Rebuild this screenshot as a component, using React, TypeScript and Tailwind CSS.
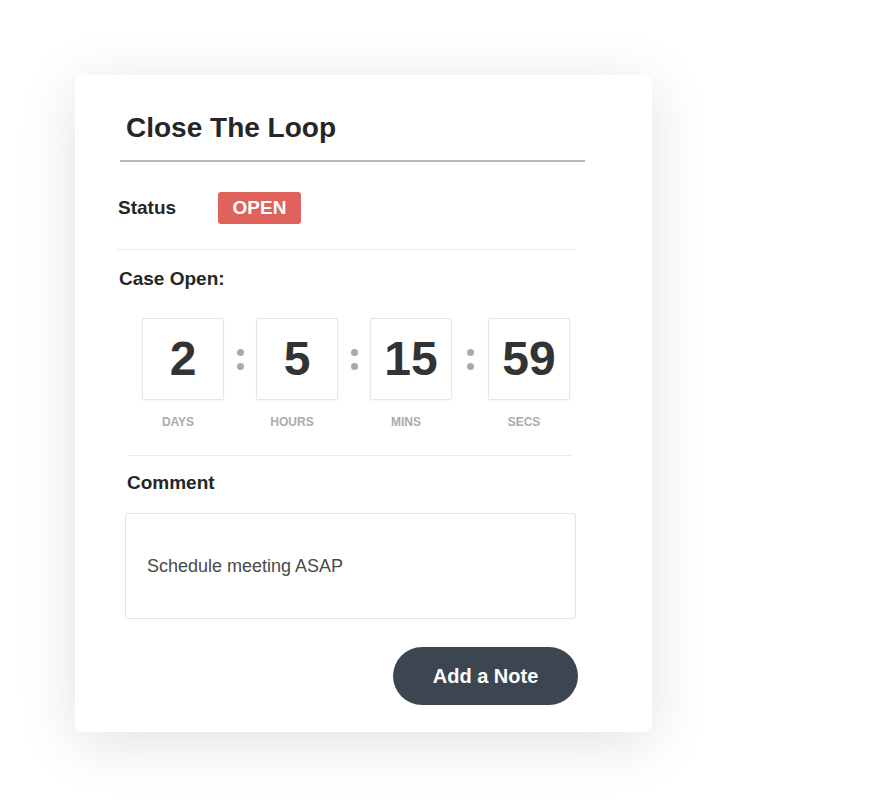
import React from "react";

const units = [
  { v: "2", l: "DAYS" },
  { v: "5", l: "HOURS" },
  { v: "15", l: "MINS" },
  { v: "59", l: "SECS" },
];

function Colon({ w }: { w: string }) {
  return (
    <div className={`${w} h-[82px] flex flex-col items-center justify-center gap-[7px]`}>
      <span className="block w-[7px] h-[7px] rounded-full bg-[#a9a9a9]" />
      <span className="block w-[7px] h-[7px] rounded-full bg-[#a9a9a9]" />
    </div>
  );
}

export default function App() {
  return (
    <div className="w-[879px] h-[808px] bg-white overflow-hidden" style={{ fontFamily: '"Liberation Sans", Arial, sans-serif' }}>
      <div className="ml-[75px] mt-[75px] w-[577px] h-[657px] bg-white rounded-[8px] shadow-[0_10px_60px_rgba(0,0,0,0.12)] pt-[37px] flex flex-col">
        <h1 className="ml-[51px] text-[28px] leading-[32px] font-bold text-[#262626]">Close The Loop</h1>
        <div className="ml-[45px] mt-[16px] w-[465px] h-[2px] bg-[#b8b8b8]" />

        <div className="ml-[43px] mt-[30px] flex items-center h-[32px]">
          <span className="w-[100px] text-[19px] leading-[24px] font-bold text-[#262626]">Status</span>
          <span className="h-[32px] w-[83px] flex items-center justify-center rounded-[3px] bg-[#e0625c] text-white text-[19px] font-bold">OPEN</span>
        </div>

        <div className="ml-[41px] mt-[25px] w-[460px] h-px bg-[#ececec]" />

        <div className="ml-[44px] mt-[17px] text-[19px] leading-[24px] font-bold text-[#262626]">Case Open:</div>

        <div className="ml-[67px] mt-[27px] flex items-start">
          {units.map((u, i) => (
            <React.Fragment key={u.l}>
              {i > 0 && <Colon w={i === 3 ? "w-[36px]" : "w-[32px]"} />}
              <div className="flex flex-col items-center w-[82px]">
                <div className="w-[82px] h-[82px] border border-[#e6e6e6] rounded-[2px] flex items-center justify-center text-[48px] font-bold text-[#333333] shadow-[0_1px_3px_rgba(0,0,0,0.04)]">
                  {u.v}
                </div>
                <div className="mt-[14px] pr-[10px] text-[12px] leading-[16px] font-bold text-[#ababab]">{u.l}</div>
              </div>
            </React.Fragment>
          ))}
        </div>

        <div className="ml-[53px] mt-[25px] w-[444px] h-px bg-[#ececec]" />

        <div className="ml-[52px] mt-[15px] text-[19px] leading-[24px] font-bold text-[#262626]">Comment</div>

        <div className="ml-[50px] mt-[18px] w-[451px] h-[106px] border border-[#e3e3e3] rounded-[3px] flex items-center pl-[21px] text-[18px] text-[#4a4a4a]">
          Schedule meeting ASAP
        </div>

        <div className="mt-[28px] mr-[74px] flex justify-end">
          <button className="w-[185px] h-[58px] rounded-full bg-[#3b4651] text-white text-[20px] font-bold">Add a Note</button>
        </div>
      </div>
    </div>
  );
}
